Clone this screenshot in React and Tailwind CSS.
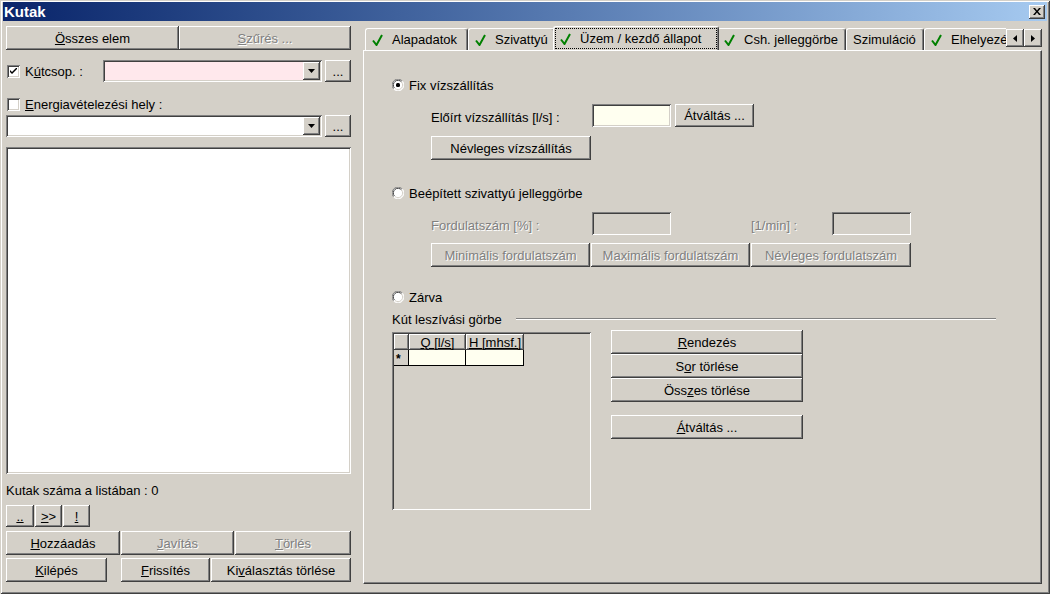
// Classic Win2000 "Kutak" dialog: list on the left, tabbed detail page on the right.
const FACE = "bg-[#d4d0c8]";
const RAISED =
  "shadow-[inset_-1px_-1px_#404040,inset_1px_1px_#ffffff,inset_-2px_-2px_#808080,inset_2px_2px_#d4d0c8]";
const SUNKEN =
  "shadow-[inset_1px_1px_#808080,inset_-1px_-1px_#ffffff,inset_2px_2px_#404040,inset_-2px_-2px_#d4d0c8]";
const DIS = "text-[#808080] [text-shadow:1px_1px_#ffffff]";

function Btn({ className = "", disabled, children }) {
  return (
    <div
      className={`${FACE} ${RAISED} flex flex-none items-center justify-center whitespace-nowrap ${
        disabled ? DIS : "text-black"
      } ${className}`}
    >
      {children}
    </div>
  );
}

function Field({ className = "" }) {
  return <div className={`${SUNKEN} flex-none ${className}`} />;
}

function Combo({ className = "" }) {
  return (
    <div className={`${SUNKEN} flex flex-none items-center justify-end p-[2px] ${className}`}>
      <div className={`${FACE} ${RAISED} flex h-full w-[17px] items-center justify-center`}>
        <svg width="7" height="4" viewBox="0 0 7 4">
          <path d="M0 0h7L3.5 4z" fill="#000" />
        </svg>
      </div>
    </div>
  );
}

function Check({ checked }) {
  return (
    <div className={`${SUNKEN} flex h-[13px] w-[13px] flex-none items-center justify-center bg-white`}>
      {checked && (
        <svg width="7" height="7" viewBox="0 0 7 7">
          <path d="M0 2v2l2 2 5-5V-1L2 4z" fill="#000" />
        </svg>
      )}
    </div>
  );
}

function Radio({ on }) {
  return (
    <svg width="12" height="12" viewBox="0 0 12 12" className="flex-none">
      <circle cx="6" cy="6" r="5.5" fill="#ffffff" />
      <path d="M10.5 2.2A5.5 5.5 0 0 0 1.5 9.8" stroke="#808080" fill="none" />
      <path d="M9.6 3A4.5 4.5 0 0 0 2.4 9" stroke="#404040" fill="none" />
      <path d="M1.8 10.2A5.5 5.5 0 0 0 10.2 1.8" stroke="#ffffff" fill="none" />
      <path d="M2.8 9.3A4.5 4.5 0 0 0 9.3 2.8" stroke="#d4d0c8" fill="none" />
      {on && <rect x="4" y="4" width="4" height="4" rx="1.5" fill="#000" />}
    </svg>
  );
}

function Tick() {
  return (
    <svg width="11" height="12" viewBox="0 0 11 12" className="flex-none">
      <path d="M1 6.5l3.5 4.5L10 1" stroke="#008000" strokeWidth="2" fill="none" />
    </svg>
  );
}

function Tab({ w, tick, children }) {
  return (
    <div
      className={`flex h-[22px] flex-none items-center overflow-hidden rounded-t-[3px] border-l border-t border-r border-l-white border-t-white border-r-[#404040] pl-[6px] shadow-[inset_-1px_0_#808080] ${w}`}
    >
      {tick && <Tick />}
      <span className={`whitespace-nowrap ${tick ? "ml-[9px]" : ""}`}>{children}</span>
    </div>
  );
}

export default function App() {
  return (
    <div
      className={`${FACE} flex h-[594px] w-[1050px] flex-col overflow-hidden px-[3px] pt-[2px] font-['Liberation_Sans',Arial,sans-serif] text-[13px] leading-none text-black shadow-[inset_1px_1px_#d4d0c8,inset_-1px_-1px_#404040,inset_2px_2px_#ffffff,inset_-2px_-2px_#808080]`}
    >
      {/* title bar */}
      <div className="flex h-[19px] flex-none items-center justify-between bg-linear-to-r from-[#0a246a] to-[#a6caf0] pl-[1px] pr-[2px]">
        <span className="text-[15px] font-bold text-white">Kutak</span>
        <div className={`${FACE} ${RAISED} flex h-[14px] w-[16px] items-center justify-center`}>
          <svg width="8" height="7" viewBox="0 0 8 7">
            <path d="M0 0h2l2 2.5L6 0h2L5 3.5 8 7H6L4 4.5 2 7H0l3-3.5z" fill="#000" />
          </svg>
        </div>
      </div>

      <div className="flex flex-1 pl-[3px] pt-[5px]">
        {/* left column */}
        <div className="flex w-[345px] flex-none flex-col">
          <div className="flex h-[24px]">
            <Btn className="w-[173px]">
              <span>
                <u>Ö</u>sszes elem
              </span>
            </Btn>
            <Btn className="w-[172px]" disabled>
              <span>
                <u>S</u>zűrés ...
              </span>
            </Btn>
          </div>

          <div className="mt-[10px] flex h-[22px] items-center">
            <div className="ml-[1px]">
              <Check checked />
            </div>
            <span className="ml-[5px] w-[78px]">
              K<u>ú</u>tcsop. :
            </span>
            <Combo className="h-[22px] w-[219px] bg-[#ffe8ec]" />
            <Btn className="ml-[3px] h-[22px] w-[26px]">...</Btn>
          </div>

          <div className="mt-[15px] flex h-[14px] items-center">
            <div className="ml-[1px]">
              <Check />
            </div>
            <span className="ml-[5px]">
              <u>E</u>nergiavételezési hely :
            </span>
          </div>

          <div className="mt-[4px] flex h-[22px] items-center">
            <Combo className="h-[22px] w-[316px] bg-white" />
            <Btn className="ml-[3px] h-[22px] w-[26px]">...</Btn>
          </div>

          <div className={`${SUNKEN} mt-[10px] h-[327px] bg-white`} />

          <div className="mt-[9px] flex h-[14px] items-center">Kutak száma a listában : 0</div>

          <div className="mt-[8px] flex h-[22px] gap-[1px]">
            <Btn className="w-[28px]">
              <u>..</u>
            </Btn>
            <Btn className="w-[27px]">
              <span>
                <u>&gt;</u>&gt;
              </span>
            </Btn>
            <Btn className="w-[27px]">
              <u>!</u>
            </Btn>
          </div>

          <div className="mt-[4px] flex h-[24px] gap-[1px]">
            <Btn className="w-[114px]">
              <span>
                <u>H</u>ozzáadás
              </span>
            </Btn>
            <Btn className="w-[113px]" disabled>
              <span>
                <u>J</u>avítás
              </span>
            </Btn>
            <Btn className="w-[116px]" disabled>
              <span>
                <u>T</u>örlés
              </span>
            </Btn>
          </div>

          <div className="mt-[3px] flex h-[24px]">
            <Btn className="w-[101px]">
              <span>
                <u>K</u>ilépés
              </span>
            </Btn>
            <Btn className="ml-[14px] w-[89px]">
              <span>
                <u>F</u>rissítés
              </span>
            </Btn>
            <Btn className="ml-[1px] w-[140px]">
              <span>
                Ki<u>v</u>álasztás törlése
              </span>
            </Btn>
          </div>
        </div>

        {/* tab control */}
        <div className="ml-[12px] flex h-[558px] w-[679px] flex-none flex-col">
          <div className="flex h-[24px] flex-none items-end pl-[2px]">
            <div className="flex min-w-0 flex-1 items-end overflow-hidden">
              <Tab w="w-[103px]" tick>
                Alapadatok
              </Tab>
              <Tab w="w-[87px]" tick>
                Szivattyú
              </Tab>
              <div className="relative z-10 -mx-[2px] -mb-px flex h-[25px] w-[166px] flex-none rounded-t-[3px] border-l border-t border-r border-l-white border-t-white border-r-[#404040] bg-[#d4d0c8] p-[1px] pb-[2px] shadow-[inset_-1px_0_#808080]">
                <div className="flex flex-1 items-center border border-dotted border-black pl-[4px]">
                  <Tick />
                  <span className="ml-[9px] whitespace-nowrap">Üzem / kezdő állapot</span>
                </div>
              </div>
              <Tab w="w-[129px]" tick>
                Csh. jelleggörbe
              </Tab>
              <Tab w="w-[78px]">Szimuláció</Tab>
              <Tab w="w-[110px]" tick>
                Elhelyezés
              </Tab>
            </div>
            <div className="mb-[3px] flex flex-none">
              <Btn className="h-[18px] w-[18px]">
                <svg width="4" height="7" viewBox="0 0 4 7">
                  <path d="M4 0v7L0 3.5z" fill="#000" />
                </svg>
              </Btn>
              <Btn className="h-[18px] w-[18px]">
                <svg width="4" height="7" viewBox="0 0 4 7">
                  <path d="M0 0v7l4-3.5z" fill="#000" />
                </svg>
              </Btn>
            </div>
          </div>

          <div className="flex flex-1 flex-col border border-t-white border-l-white border-r-[#404040] border-b-[#404040] pl-[28px] pt-[26px] shadow-[inset_-1px_-1px_#808080]">
            <div className="flex h-[16px] items-center gap-[5px]">
              <Radio on />
              <span>Fix vízszállítás</span>
            </div>

            <div className="ml-[39px] mt-[11px] flex h-[23px] items-center">
              <span className="w-[161px] pt-[4px]">Előírt vízszállítás [l/s] :</span>
              <Field className="h-[23px] w-[79px] bg-[#fffff0]" />
              <Btn className="ml-[4px] h-[23px] w-[79px]">Átváltás ...</Btn>
            </div>

            <Btn className="ml-[39px] mt-[9px] h-[24px] w-[160px]">Névleges vízszállítás</Btn>

            <div className="mt-[25px] flex h-[16px] items-center gap-[5px]">
              <Radio />
              <span>Beépített szivattyú jelleggörbe</span>
            </div>

            <div className="ml-[39px] mt-[11px] flex h-[23px] items-center">
              <span className={`w-[161px] pt-[4px] ${DIS}`}>Fordulatszám [%] :</span>
              <Field className="h-[23px] w-[79px]" />
              <span className={`ml-[80px] w-[81px] pt-[4px] ${DIS}`}>[1/min] :</span>
              <Field className="h-[23px] w-[79px]" />
            </div>

            <div className="ml-[39px] mt-[8px] flex h-[24px] gap-[1px]">
              <Btn className="w-[159px]" disabled>
                Minimális fordulatszám
              </Btn>
              <Btn className="w-[159px]" disabled>
                Maximális fordulatszám
              </Btn>
              <Btn className="w-[160px]" disabled>
                Névleges fordulatszám
              </Btn>
            </div>

            <div className="mt-[22px] flex h-[16px] items-center gap-[5px]">
              <Radio />
              <span>Zárva</span>
            </div>

            <div className="mr-[45px] mt-[7px] flex h-[14px] items-center">
              <span className="whitespace-nowrap">Kút leszívási görbe</span>
              <div className="ml-[14px] h-[2px] flex-1 border-t border-b border-t-[#808080] border-b-white" />
            </div>

            <div className="mt-[6px] flex items-start">
              <div className={`${SUNKEN} h-[178px] w-[199px] flex-none p-[2px]`}>
                <div className="flex h-[16px]">
                  <div className={`${RAISED} w-[15px]`} />
                  <div className={`${RAISED} flex w-[57px] items-center justify-center underline`}>Q [l/s]</div>
                  <div className={`${RAISED} flex w-[58px] items-center justify-center underline`}>H [mhsf.]</div>
                </div>
                <div className="flex h-[16px]">
                  <div className="w-[15px] border-r border-b border-black pl-[2px] pt-[3px] text-[12px] font-bold">*</div>
                  <div className="w-[57px] border-r border-b border-black bg-[#fffff0]" />
                  <div className="w-[58px] border-r border-b border-black bg-[#fffff0]" />
                </div>
              </div>

              <div className="-mt-[2px] ml-[20px] flex w-[192px] flex-none flex-col">
                <Btn className="h-[24px]">
                  <span>
                    <u>R</u>endezés
                  </span>
                </Btn>
                <Btn className="h-[24px]">
                  <span>
                    S<u>o</u>r törlése
                  </span>
                </Btn>
                <Btn className="h-[24px]">
                  <span>
                    Öss<u>z</u>es törlése
                  </span>
                </Btn>
                <Btn className="mt-[13px] h-[24px]">
                  <span>
                    <u>Á</u>tváltás ...
                  </span>
                </Btn>
              </div>
            </div>
          </div>
        </div>
      </div>
    </div>
  );
}
